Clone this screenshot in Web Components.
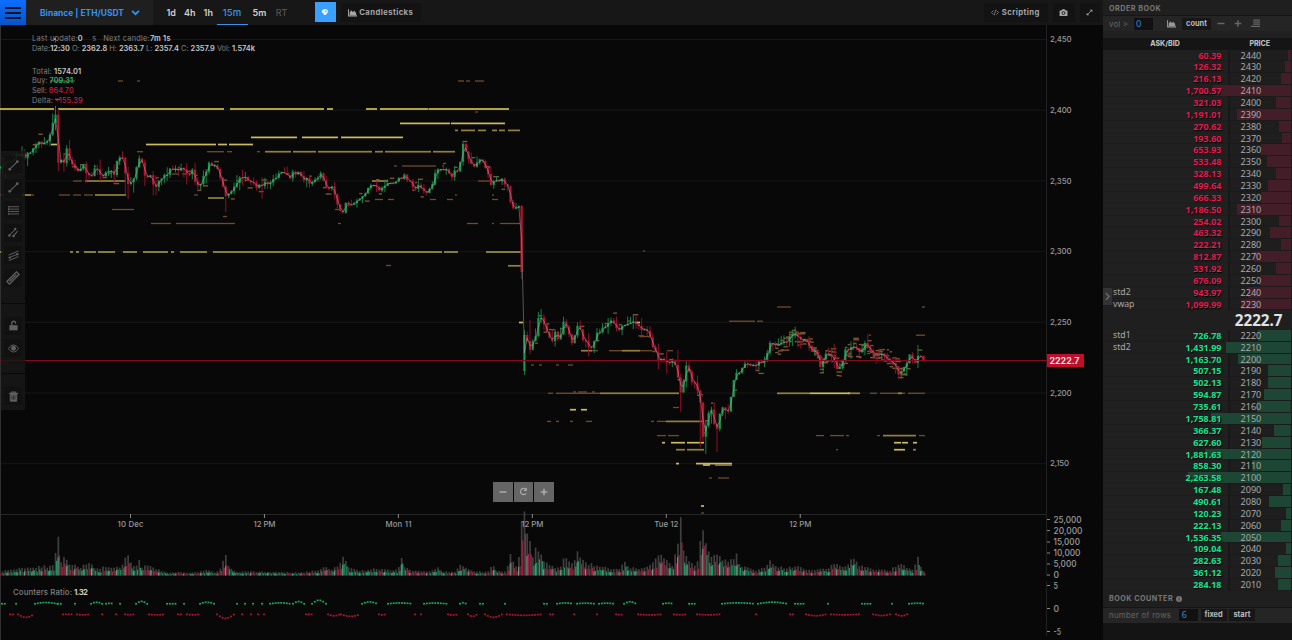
<!DOCTYPE html>
<html lang="en">
<head>
<meta charset="utf-8">
<title>ETH/USDT</title>
<style>
  html, body { margin: 0; height: 100%; background: #080808; overflow: hidden; }
</style>
</head>
<body>
<trade-app></trade-app>

<script>
const make = (html) => {
  const t = document.createElement('template');
  t.innerHTML = html;
  return t;
};

class BaseElement extends HTMLElement {
  constructor() {
    super();
    this.attachShadow({ mode: 'open' });
    this.shadowRoot.appendChild(this.constructor.template.content.cloneNode(true));
  }
  $(sel) { return this.shadowRoot.querySelector(sel); }
}

/* ---------- icons ---------- */
const ICONS = {
  menu: '<path d="M0 3h16M0 8h16M0 13h16" stroke-width="2"/>',
  down: '<path d="M2 5l6 6 6-6" stroke-width="3.2"/>',
  area: '<path d="M1 2v12h15" stroke-width="1.8"/><path d="M3 12.500V8l3-4 2.500 3 2.500-2 3.500 4v3.500z" fill="currentColor" stroke="none"/>',
  head: '<path d="M8 2c4 0 6 2.500 6.500 6l-1.500 1-1 3-2 .5V14H5.500v-2.500C3 10.500 1.500 9 1.500 7 1.500 4 4.500 2 8 2z" fill="currentColor" stroke="none"/><circle cx="10" cy="6.500" r="1.300" fill="#3aa0ff" stroke="none"/>',
  code: '<path d="M5 4L1 8l4 4M11 4l4 4-4 4M9.500 2.500l-3 11" stroke-width="1.3"/>',
  camera: '<path d="M1 4.500h3.500L6 2h4l1.500 2.500H15V14H1z" fill="currentColor" stroke="none"/><circle cx="8" cy="9" r="2.600" stroke="#111" stroke-width="1.500"/>',
  expand: '<path d="M5 11L11 5" stroke-width="2"/><path d="M8.500 1.500h6v6zM1.500 8.500v6h6z" fill="currentColor" stroke="none"/>',
  lines: '<path d="M3 2.500h13M3 6h13M3 9.500h13M3 13h13" stroke-width="1.400"/><path d="M0 2.500h2.500M0 6h2.500M0 9.500h2.500M0 13h2.500" stroke-width="2.200"/>',
  trend: '<path d="M3 13L13 3" stroke-width="1.600"/><circle cx="2.500" cy="13.500" r="2" fill="currentColor" stroke="none"/><circle cx="13.500" cy="2.500" r="2" fill="currentColor" stroke="none"/>',
  pitch: '<path d="M2 12L10 4M8 13l6-7" stroke-width="1.500"/><circle cx="2" cy="12.500" r="1.800" fill="currentColor" stroke="none"/><circle cx="10.500" cy="3" r="1.800" fill="currentColor" stroke="none"/><circle cx="8" cy="13" r="1.800" fill="currentColor" stroke="none"/>',
  channel: '<path d="M1 7.500l14-6M1 11.500l14-6M1 15.500l14-6" stroke-width="1.400"/><circle cx="2.500" cy="11" r="1.700" fill="currentColor" stroke="none"/><circle cx="13.500" cy="6" r="1.700" fill="currentColor" stroke="none"/>',
  ruler: '<path d="M1 12L12 1l3 3L4 15zM4 12l8-8" stroke-width="1.500"/>',
  lock: '<path d="M2 7.500h12V15H2z" fill="currentColor" stroke="none"/><path d="M5.500 8V4.500a2.700 2.700 0 0 1 5.400 0V5.500" stroke-width="1.900"/>',
  eye: '<path d="M.5 8C3 4.500 5.500 3 8 3s5 1.500 7.500 5C13 11.500 10.500 13 8 13S3 11.500.5 8z" stroke-width="1.400"/><circle cx="8" cy="7.500" r="3.600" fill="currentColor" stroke="none"/>',
  trash: '<path d="M1.500 3.500h13M5.500 3V1.500h5V3" stroke-width="1.600"/><path d="M3.200 4.500h9.600V15H3.200z" fill="currentColor" stroke-width="1"/><path d="M5.800 6.500v6M8 6.500v6M10.200 6.500v6" stroke="#151515" stroke-width=".9"/>',
  minus: '<path d="M1 8h14" stroke-width="3"/>',
  plus: '<path d="M1.500 8h13M8 1.500v13" stroke-width="3"/>',
  reload: '<path d="M12.500 11.500A5.500 5.500 0 1 1 12 4" stroke-width="2.200"/><path d="M14 1v6H8z" fill="currentColor" stroke="none"/>',
  steps: '<path d="M4 2h12M4 5.500h12M4 9h12M0 13h16" stroke-width="2"/>',
  right: '<path d="M5 2l6 6-6 6" stroke-width="2"/>',
  info: '<circle cx="8" cy="8" r="8" fill="currentColor" stroke="none"/><path d="M8 7v5M8 3.500v2" stroke="#1c1c1c" stroke-width="2.200"/>'
};

class UiIcon extends BaseElement {
  static template = make(`
    <style>
      :host { display: inline-block; flex: none; width: 10px; height: 10px; }
      svg { display: block; width: 100%; height: 100%; fill: none; stroke: currentColor; }
    </style>
    <svg viewBox="0 0 16 16"></svg>`);
  connectedCallback() { this.$('svg').innerHTML = ICONS[this.getAttribute('name')] || ''; }
}

/* ---------- top bar ---------- */
class TopBar extends BaseElement {
  static template = make(`
    <style>
      :host { display: flex; height: 25px; background: #171717; color: #d2d2d2; font-weight: 600; }
      .menu { width: 26px; display: grid; place-items: center; background: linear-gradient(#0d6efd, #0754ca); color: #07162e; }
      .menu ui-icon { width: 16px; height: 16px; }
      .pair { width: 127px; box-sizing: border-box; padding-left: 14px; display: flex; align-items: center; gap: 3px; background: #1f1f1f; color: #3793ec; font-size: 8.400px; font-weight: 700; letter-spacing: .04px; white-space: nowrap; }
      .pair span { width: 88px; }
      .pair ui-icon { width: 9px; height: 9px; }
      nav { display: flex; margin-left: 9px; font-size: 9px; }
      nav span { display: grid; place-items: center; box-sizing: border-box; height: 25px; width: 18.500px; }
      nav .on { width: 31px; margin: 0 1px 0 -1px; font-weight: 500; color: #3793ec; border-bottom: 1.500px solid #3793ec; font-size: 9.600px; }
      nav .five { width: 22px; }
      nav .rt { color: #555; width: 22px; font-weight: 500; }
      .head { width: 21px; height: 20px; margin: 2px 0 0 22px; background: #3aa0ff; color: #e4f0fb; display: grid; place-items: center; }
      .head ui-icon { width: 8px; height: 8px; }
      .btn { display: flex; align-items: center; justify-content: center; gap: 2.500px; height: 19px; margin-top: 3px; background: #131313; color: #a6a6a6; font-size: 7.700px; font-weight: 700; letter-spacing: .42px; box-sizing: border-box; }
      .btn ui-icon { width: 9px; height: 9px; }
      .candles { width: 80px; margin-left: 5px; }
      .grow { flex: 1; }
    </style>
    <div class="menu"><ui-icon name="menu"></ui-icon></div>
    <div class="pair"><span>Binance | ETH/USDT</span><ui-icon name="down"></ui-icon></div>
    <nav><span>1d</span><span>4h</span><span>1h</span><span class="on">15m</span><span class="five">5m</span><span class="rt">RT</span></nav>
    <div class="head"><ui-icon name="head"></ui-icon></div>
    <div class="btn candles"><ui-icon name="area"></ui-icon><span>Candlesticks</span></div>
    <div class="grow"></div>
    <div class="btn" style="width:64px"><ui-icon name="code" style="width:8px"></ui-icon><span>Scripting</span></div>
    <div class="btn" style="width:22px;margin-left:5px"><ui-icon name="camera"></ui-icon></div>
    <div class="btn" style="width:20px;margin:3px 3px 0 5px"><ui-icon name="expand" style="width:7px;height:7px"></ui-icon></div>`);
}

/* ---------- drawing tools ---------- */
class DrawingTools extends BaseElement {
  static template = make(`
    <style>
      :host { display: flex; flex-direction: column; width: 24px; height: 259px; background: rgba(23, 23, 23, .86); color: #606060; align-items: center; }
      div { width: 18px; height: 18px; margin-top: 4.500px; background: rgba(14, 14, 14, .5); display: grid; place-items: center; flex: none; }
      div:first-of-type { margin-top: 5px; }
      ui-icon { width: 11px; height: 11px; }
      hr { width: 24px; margin: 16px 0 8.500px; border: 0; border-top: 1px solid #0a0a0a; flex: none; }
    </style>
    <div><ui-icon name="trend"></ui-icon></div>
    <div><ui-icon name="trend"></ui-icon></div>
    <div><ui-icon name="lines"></ui-icon></div>
    <div><ui-icon name="pitch"></ui-icon></div>
    <div><ui-icon name="channel"></ui-icon></div>
    <div><ui-icon name="ruler" style="width:14px;height:14px"></ui-icon></div>
    <hr>
    <div><ui-icon name="lock"></ui-icon></div>
    <div><ui-icon name="eye"></ui-icon></div>
    <hr>
    <div><ui-icon name="trash"></ui-icon></div>`);
}

/* ---------- candle read-out ---------- */
class CandleLegend extends BaseElement {
  static template = make(`
    <style>
      :host { display: block; font-size: 7.400px; line-height: 9.700px; color: #808080; }
      div { white-space: pre; }
      b { color: #c8c8c8; font-weight: 600; }
      .up { color: #18b86e; } .down { color: #c41d45; font-weight: 500; }
      .first { letter-spacing: .23px; } .second { letter-spacing: -.01px; }
      .sum { margin-top: 12.800px; }
      .wide { letter-spacing: .12px; }
    </style>
    <div class="first">Last update:<b>0</b>    s   Next candle:<b>7m 1s</b></div>
    <div class="second">Date:<b>12:30</b> O: <b>2362.8</b> H: <b>2363.7</b> L: <b>2357.4</b> C: <b>2357.9</b> Vol: <b>1.574k</b></div>
    <div class="sum wide">Total: <b>1574.01</b></div>
    <div>Buy: <b class="up">709.31</b></div>
    <div>Sell: <b class="down">864.70</b></div>
    <div class="wide">Delta: <b class="down">-155.39</b></div>`);
}

class ZoomButtons extends BaseElement {
  static template = make(`
    <style>
      :host { display: flex; gap: 1px; }
      div { width: 19.500px; height: 19.500px; background: #656565; color: #aaa; display: grid; place-items: center; }
      ui-icon { width: 8px; height: 8px; }
    </style>
    <div><ui-icon name="minus"></ui-icon></div>
    <div><ui-icon name="reload" style="width:9px;height:9px"></ui-icon></div>
    <div><ui-icon name="plus"></ui-icon></div>`);
}

/* ---------- chart ---------- */
const STEP = 2.791;

// close line, x y pairs in chart pixels
const PRICE = [0,168, 4,163, 10,164, 15,157, 20,153, 26,157, 32,150, 36,147, 40,137, 43,147, 47,140, 52,128, 55,108, 58,160,
  61,161, 64,163, 67,148, 70,165, 76,170, 83,165, 90,179, 97,166, 102,178, 107,168, 114,177, 118,156, 123,158, 127,185, 133,180,
  140,158, 146,177, 150,172, 154,188, 160,180, 167,174, 172,168, 182,169, 188,176, 192,171, 198,187, 203,178, 210,163, 217,170,
  222,178, 225,200, 230,191, 240,179, 247,178, 257,188, 265,184, 275,178, 283,173, 290,176, 297,171, 305,179, 312,185, 320,173,
  327,192, 333,188, 337,202, 341,216, 346,203, 352,202, 357,199, 362,196, 369,188, 373,182, 380,190, 388,184, 396,182, 405,175,
  413,186, 420,187, 428,193, 432,187, 436,171, 445,170, 451,176, 459,169, 463,145, 466,150, 470,163, 476,166, 481,158, 486,167,
  491,183, 497,179, 503,181, 508,189, 512,206, 519,206, 521.5,271, 524,335, 527,340, 530,350, 536,334, 539,315, 545,326, 551,343,
  556,331, 559,342, 564,321, 567,325, 572,344, 578,325, 583,339, 591,347, 597,333, 605,325, 612,321, 618,328, 627,325, 634,322,
  640,330, 647,330, 652,343, 659,360, 667,363, 672,358, 676,370, 681,394, 687,364, 693,384, 697,386, 701,405, 703,436, 706,425,
  710,405, 716,433, 721,408, 728,412, 734,378, 740,371, 748,363, 757,366, 766,356, 770,345, 776,348, 783,343, 787,341, 793,334,
  800,338, 806,341, 812,351, 816,352, 820,366, 827,350, 832,356, 838,371, 845,352, 853,345, 859,352, 866,343, 871,351, 877,354,
  888,357, 895,365, 899,378, 905,367, 911,353, 915,363, 919,355, 924,360];

// volume height above the base line
const VOLUME = [0,4, 20,8, 30,8, 40,10, 50,9, 54,10, 56,26, 58,38, 61,15, 63,18, 70,11, 80,9, 90,12, 95,7, 105,9, 118,9, 123,10,
  125.500,19, 128.500,19, 132,11, 136,8, 139,15, 142,9, 145,10, 155,8, 162,4, 170,3.500, 190,3, 200,4, 209,6, 215,3, 221,7, 225.500,24,
  229,8, 236,4, 260,4, 300,3, 315,5, 325,8, 332,6, 338,11, 341,17, 343,17, 350,8, 360,5, 375,7, 390,6, 398,6, 401.500,18, 405,8,
  412,5, 430,4, 437,9, 442,4, 455,4, 461,11, 470,7, 475,4, 488,4, 492,11, 497,4, 506,5, 510,21, 513,14, 518,6, 521.500,52,
  524,64, 527,46, 530,32, 533,21, 536,27, 539,25, 544,14, 555,8, 561,10, 564,17, 570,14, 575,15, 577.500,26, 581,15, 590,12, 600,9,
  612,7, 620,7, 624,14, 628,9, 640,6, 650,10, 656,20, 659,25, 664,16, 667,18, 672,9, 675,22, 678,36, 680.500,56, 683,27, 690,14,
  697,10, 700,35, 703,52, 706,36, 710,19, 717,25, 722,16, 730,14, 736,22, 740,11, 755,5, 765,8, 770,17, 774,9, 785,8, 797,9,
  810,5, 825,7, 837,12, 842,8, 849,13, 853,19, 858,11, 870,7, 890,5, 897,11, 905,10, 912,6, 916,12, 918,22, 920.500,9, 925,3];

// resting-liquidity levels: y, tone, then x ranges
const LEVELS = [
  [39, 'y', '54-56'],
  [81, 'b', '50-75 118-123 137-140 458-464 466-470 475-484'],
  [109, 'y', '0-54 58-224 230-324 327-333 366-377 380-428 428.500-509'],
  [112, 'b', '475-478'],
  [123.4, 'y', '400-450 451-505'],
  [130.4, 'g', '455-458 461-475 478-486 492-497 499-505 508-520'],
  [137.4, 'y', '251-297 302-338 341-403'],
  [144.5, 'y', '51-57 146-216 218-227 229-253'],
  [151.7, 'g', '265-291 293-316 318-372 375-383 385-431 433-455'],
  [151.7, 'b', '137-143 207-224 227-232 257-260'],
  [166, 'b', '394-397 402-436 442-444'],
  [174, 'b', '17-22 172-179 182-187'],
  [181, 'g', '85-125 372-388'],
  [181, 'b', '73-82 478-490'],
  [195, 'b', '0-34 59-70 73-81 84-93 194-198 455-457 492-494'],
  [195, 'g', '22-31 95-126'],
  [198, 'g', '208-224'],
  [199.500, 'b', '375-383 388-394 430-436 447-453 492-498'],
  [209.500, 'b', '112-134 335-339'],
  [216.500, 'b', '223-227'],
  [223.500, 'b', '151-171 176-235 338-341 467-478 492-494 500-520'],
  [252, 'o', '0-3 70-73 76-79 84-96 98-115 123-137 143-168 171-174 180-207 213-442 444-458 486-521'],
  [251, 'b', '643-645'],
  [265.800, 'g', '508-521'],
  [265.500, 'b', '386-391'],
  [307, 'b', '777-791 922-925'],
  [321.200, 'b', '729-755 757-763'],
  [322.500, 'y', '519-523 635-640'],
  [335.200, 'b', '869-871 916-925'],
  [336.500, 'b', '640-650'],
  [350.700, 'g', '581-592 622-640'],
  [350.700, 'b', '592-598 609-622 640-652 667-673'],
  [365, 'b', '531-534 539-542 556-559 568-573'],
  [392, 'b', '573-576 578-587 592-595'],
  [393.300, 'b', '548-553 556-600 870-877 880-905 908-925'],
  [393.300, 'g', '600-679 777-810 848-860 898-902'],
  [393.300, 'y', '810-850'],
  [407.500, 'b', '673-679'],
  [409.700, 'y', '570-576 581-587'],
  [421.400, 'b', '547-551 556-559 570-573 586-592 651-654 657-666'],
  [421.400, 'g', '666-702'],
  [435.600, 'b', '657-666 668-679 816-824 830-844 846-849 877-880 919-925'],
  [435.600, 'g', '883-916'],
  [442.700, 'y', '662-665 671-685 687-704 894-901 902-908 913-917'],
  [449.700, 'g', '676-685 687-704 913-916'],
  [449.700, 'y', '894-905'],
  [449.700, 'b', '836-838'],
  [463.600, 'y', '676-679 696-732'],
  [465, 'y', '703-710'],
  [465, 'g', '715-732'],
  [478, 'b', '709-712 718-729'],
  [506, 'y', '701-704'],
  [513, 'b', '701-704']
];
const TONES = { y: '#cdbd5a', g: '#94803c', b: '#724a2a', o: '#99934a' };

// counter dots: "from-to" or "from-to:bump"
const COUNTS_UP = '2-7 16-16 35-57:1.2 58-62 75-75 91-102:1.5 106-113:.5 120-122 136-147:2.4 167-176 184-184 200-214:1.5 237-239 245-245 253-253 262-262 270-290:.9 293-304:2.2 312-326:3.5 362-377:1.8 388-412:.8 424-446:.7 460-466:1 480-483 505-505 544-547 557-573:.8 577-594:.6 599-614:.6 624-636:2 663-673:.6 689-695 722-754:.9 758-787:1.6 795-804 828-828 862-872 892-892 909-925:.5';
const COUNTS_DOWN = '10-13 18-34:3 63-72 77-89:.5 102-102 116-116 125-134:.4 149-165:.5 178-181 187-199:.5 217-234:4 242-242 251-251 258-258 264-264 306-312 328-340:1.5 341-360:2 379-385:.5 415-415 421-421 448-458:.7 468-477:2 485-502:3 507-541:1 550-555 574-574 597-597 616-623:.4 638-661:.6 674-687:.4 697-720:.5 756-756 790-793 806-826:1.4 831-859:.5 873-890:1.2 896-907:1.5';

const lerp = (pts, x) => {
  let i = 0;
  while (i < pts.length - 4 && pts[i + 2] < x) i += 2;
  const t = Math.min(1, Math.max(0, (x - pts[i]) / (pts[i + 2] - pts[i])));
  return pts[i + 1] + (pts[i + 3] - pts[i + 1]) * t;
};

class PriceChart extends BaseElement {
  static template = make(`
    <style>
      :host { display: block; position: relative; background: #080808; overflow: hidden; }
      svg { display: block; }
      text { font-size: 7.800px; fill: #9a9a9a; font-weight: 500; }
      .volume-axis { font-size: 9px; }
      candle-legend { position: absolute; left: 32px; top: 9.400px; }
      drawing-tools { position: absolute; left: 1px; top: 126px; }
      zoom-buttons { position: absolute; left: 493px; top: 457px; }
    </style>
    <svg width="1102" height="615" viewBox="0 25 1102 615"></svg>
    <drawing-tools></drawing-tools>
    <candle-legend></candle-legend>
    <zoom-buttons></zoom-buttons>`);

  connectedCallback() {
    let seed = 11;
    this.rand = () => (seed = (seed * 16807) % 2147483647) / 2147483647;
    this.$('svg').innerHTML = this.grid() + this.volume() + this.levels() + this.candles() + this.counters() + this.axes();
  }

  rect(x, y, w, h, fill) {
    return `<rect x="${x.toFixed(2)}" y="${y.toFixed(2)}" width="${w.toFixed(2)}" height="${h.toFixed(2)}" fill="${fill}"/>`;
  }

  grid() {
    let s = '';
    for (let i = 0; i < 7; i++) s += this.rect(0, 39 + i * 70.700, 1046, 1, '#171717');
    s += this.rect(0, 514, 1046, 1, '#262626') + this.rect(1046, 25, 1, 490, '#222');
    return s + this.rect(0, 25, 1, 615, '#303030');
  }

  levels() {
    let s = '';
    for (const [y, tone, spans] of LEVELS) {
      for (const span of spans.split(' ')) {
        const [a, b] = span.split('-').map(Number);
        const h = tone === 'b' ? 1.300 : 1.700;
        s += this.rect(a, y - h / 2, b - a, h, TONES[tone]);
      }
    }
    // scattered small orders close to the price
    for (let x = 2; x < 922; x += STEP) {
      const busy = x > 775 && x < 905;
      const n = busy ? 3 : (this.rand() < .32 ? 1 : 0);
      if (x > 505 && x < 530) continue;
      for (let k = 0; k < n; k++) {
        const y = lerp(PRICE, x) + (this.rand() - .5) * (busy ? 16 : 20);
        s += this.rect(x, y, 2 + this.rand() * 4, 1.400, '#7a5430');
      }
    }
    return s;
  }

  candles() {
    // long wicks: candle index -> [top, low], 0 leaves that side alone
    const tails = { 20: [106, 0], 21: [109, 171], 45: [0, 194], 46: [0, 199], 81: [0, 212], 187: [0, 279], 188: [330, 375],
      190: [320, 0], 244: [0, 412], 251: [0, 447], 253: [0, 454], 257: [0, 452], 243: [350, 0], 290: [336, 0], 329: [345, 0] };
    let s = '';
    let line = '';
    let prev = 169;
    for (let i = 0; i * STEP < 925; i++) {
      const x = i * STEP - .3;
      let close = lerp(PRICE, x) + (this.rand() - .5) * 5.200;
      let open = prev;
      if (i === 187) { open = 206; close = 272; }
      if (i === 188) { open = 371; close = 335; }
      const wild = x < 270 || (x > 525 && x < 730) || x > 770 ? 13 : 8;
      let top = Math.min(open, close) - this.rand() * this.rand() * wild;
      let low = Math.max(open, close) + this.rand() * this.rand() * wild;
      const [high, deep] = tails[i] || [0, 0];
      if (high) top = Math.min(top, high);
      if (deep) low = Math.max(low, deep);
      const up = close <= open;
      s += this.rect(x - .5, top, 1, low - top, up ? '#147f44' : '#8c1029');
      s += this.rect(x - 1.100, Math.min(open, close), 2.200, Math.max(1.200, Math.abs(close - open)), up ? '#14994d' : '#c01031');
      line += `${line ? 'L' : 'M'}${x.toFixed(1)} ${((open + close) / 2).toFixed(1)}`;
      prev = close;
    }
    return s + `<path d="${line}" fill="none" stroke="#aaa" stroke-opacity=".6" stroke-width=".8"/>`;
  }

  volume() {
    let s = '';
    for (let i = 0; i * STEP < 924; i++) {
      const x = i * STEP - .3;
      const h = Math.max(2, lerp(VOLUME, x) * (.82 + this.rand() * .28));
      const up = lerp(PRICE, x) < lerp(PRICE, x - STEP);
      const part = .45 + this.rand() * .25;
      s += this.rect(x - .8, 575.500 - h, 1.700, h, '#3f3f3f');
      s += this.rect(x + .5, 575.500 - h * part, 1.300, h * part, up ? '#149a63' : '#a51f42');
      if (i % 3 === 0) s += this.rect(x - .8, 575.500 - h * part * .9, 1, h * part * .9, '#789b82');
    }
    return s;
  }

  counters() {
    const dots = (spec, base, dir, fill) => spec.split(' ').map((part) => {
      const [range, bump = 0] = part.split(':');
      const [a, b] = range.split('-').map(Number);
      let out = '';
      for (let x = a; x <= b + .5; x += STEP) {
        const lift = b > a ? Math.sin(Math.PI * (x - a) / (b - a)) * bump * dir : 0;
        out += this.rect(x - .9, base + lift - .8, 1.900, 1.700, fill);
      }
      return out;
    }).join('');
    return dots(COUNTS_UP, 603.700, -1, '#18a960') + dots(COUNTS_DOWN, 614.300, 1, '#aa1730');
  }

  axes() {
    let s = '';
    ['2,450', '2,400', '2,350', '2,300', '2,250', '2,200', '2,150'].forEach((label, i) => {
      const w = i === 6 ? 19 : 21.500;
      s += `<text x="1050" y="${(42.100 + i * 70.700).toFixed(1)}" textLength="${w}">${label}</text>`;
    });
    ['10 Dec', '12 PM', 'Mon 11', '12 PM', 'Tue 12', '12 PM'].forEach((label, i) => {
      const x = 130.500 + i * 133.950;
      const w = i % 2 ? 22 : (i === 4 ? 24 : 26);
      s += this.rect(x - .5, 514, 1, 4, '#888');
      s += `<text x="${x - w / 2}" y="526.500" textLength="${w}">${label}</text>`;
    });
    [['25,000', 519.500, 28], ['20,000', 530.600, 29], ['15,000', 542, 26.500], ['10,000', 553, 27], ['5,000', 564, 23], ['0', 575, 5.500],
      ['5', 585.500, 4.500], ['0', 608.500, 5.500], ['-5', 631.500, 7.500]].forEach(([label, y, w]) => {
      s += this.rect(1047, y - .5, 3, 1, '#888');
      s += `<text class="volume-axis" x="1053.500" y="${y + 3}" textLength="${w}" lengthAdjust="spacingAndGlyphs">${label}</text>`;
    });
    s += this.rect(1046, 514, 1, 62, '#222') + this.rect(1046, 581, 1, 55, '#222');
    s += this.rect(0, 360, 1047, 1, '#87091f') + this.rect(1047, 354, 37, 13, '#c00e2d');
    s += `<text x="1049.500" y="363.500" textLength="30" lengthAdjust="spacingAndGlyphs" style="fill:#eee;font-weight:600;font-size:8.800px">2222.7</text>`;
    s += `<text x="13" y="594.500" textLength="59" style="fill:#808080">Counters Ratio:</text><text x="74" y="594.500" textLength="14" style="fill:#ccc;font-weight:700">1.32</text>`;
    return s;
  }
}

/* ---------- order book ---------- */
class BookRow extends BaseElement {
  static template = make(`
    <style>
      :host { display: grid; grid-template-columns: 30px 78.500px 1fr; align-items: center; height: 11.870px; box-sizing: border-box; padding-left: 10.500px;
        font: 9px/11px "Noto Sans", "Open Sans", sans-serif; color: #a8a8a8; border-bottom: 1px solid rgba(0, 0, 0, .08);
        background: linear-gradient(to left, var(--bar), var(--bar)) no-repeat right 1px top 0 / var(--w) 100%, linear-gradient(to right, #202020 125px, #181818 125px, #181818 127px, #1e1e1e 127px); }
      .size { text-align: right; font-weight: 700; color: var(--ink); text-shadow: 1px 1px 1px #000; }
      .price { padding-left: 19px; font-size: 9.100px; }
      .tag { font-size: 8.700px; white-space: nowrap; }
    </style>
    <span class="tag"></span><span class="size"></span><span class="price"></span>`);
  set row([price, size, side, tag]) {
    this.$('.tag').textContent = tag || '';
    this.$('.size').textContent = size;
    this.$('.price').textContent = price;
    this.style.setProperty('--w', parseFloat(size.replace(',', '')) * .0457 + 'px');
    this.style.setProperty('--bar', side === 'ask' ? '#431e28' : '#1d4634');
    this.style.setProperty('--ink', side === 'ask' ? '#e51a50' : '#12e48e');
  }
}

class BookPanel extends BaseElement {
  static template = make(`
    <style>
      :host { display: block; }
      .title { height: var(--title-height, 15px); padding-left: 6.500px; font-size: 7.200px; font-weight: 700; letter-spacing: .5px; color: #777; background: #1f1f1f; border-bottom: 1px solid #161616; display: flex; align-items: center; gap: 3px; }
      .controls { height: 15px; padding-left: 6.500px; display: flex; align-items: center; background: #252525; color: #666; font-size: 7.800px; letter-spacing: .2px; }
    </style>
    <div class="title"><slot name="title"></slot></div>
    <div class="controls"><slot></slot></div>`);
}

class OrderBook extends BaseElement {
  static template = make(`
    <style>
      :host { display: flex; flex-direction: column; background: #141414; position: relative; overflow: hidden; }
      .columns { margin-top: 6.500px; height: 12px; display: grid; grid-template-columns: 125px 1fr; text-align: center; font-size: 7px; line-height: 12.500px; font-weight: 800; color: #bbb; background: #151515; }
      .top { background: #202020; }
      .last { height: 19.500px; background: #1f1f1f; text-align: right; padding-right: 9.500px; font: 700 15.200px/20px "Noto Sans", sans-serif; color: #e2e2e2; }
      input { width: 19px; height: 12px; box-sizing: border-box; padding: 0 0 0 2.500px; border: 0; background: #111; color: #3485ce; font: 9.500px/12px "Noto Sans", sans-serif; }
      .chip { height: 12px; line-height: 12px; background: #171717; color: #bbb; font-weight: 700; font-size: 7.400px; text-align: center; letter-spacing: 0; }
      book-panel ui-icon { width: 9px; height: 9px; }
      book-panel .info { width: 6px; height: 6px; }
      .counter { --title-height: 16px; }
      .handle { position: absolute; left: 0; top: 288px; width: 9px; height: 17px; background: #333; color: #777; display: grid; place-items: center; }
      .handle ui-icon { width: 9px; height: 9px; }
    </style>
    <div class="top">
      <book-panel>
        <span slot="title" style="padding-top:1px">ORDER BOOK</span>
        <span style="width:24.500px">vol &gt;</span>
        <input value="0">
        <ui-icon name="area" style="margin-left:14.500px;color:#999"></ui-icon>
        <span class="chip" style="width:29px;margin-left:6px">count</span>
        <ui-icon name="minus" style="margin-left:6px;width:8px"></ui-icon>
        <ui-icon name="plus" style="margin-left:9px;width:8px"></ui-icon>
        <ui-icon name="steps" style="margin-left:9px"></ui-icon>
      </book-panel>
      <div class="columns"><span>ASK/BID</span><span>PRICE</span></div>
    </div>
    <div class="asks"></div>
    <div class="last">2222.7</div>
    <div class="bids"></div>
    <book-panel class="counter">
      <span slot="title">BOOK COUNTER</span><ui-icon slot="title" class="info" name="info"></ui-icon>
      <span style="width:70px;letter-spacing:.3px;white-space:nowrap">number of rows</span>
      <input value="6">
      <span class="chip" style="width:26px;margin-left:2.500px">fixed</span>
      <span class="chip" style="width:26px;margin-left:2.500px">start</span>
    </book-panel>
    <div class="handle"><ui-icon name="right"></ui-icon></div>`);

  connectedCallback() {
    const asks = '60.39 126.32 216.13 1,700.57 321.03 1,191.01 270.62 193.60 653.93 533.48 328.13 499.64 666.33 1,186.50 254.02 463.32 222.21 812.87 331.92 676.09 943.97 1,099.99'.split(' ');
    const bids = '726.78 1,431.99 1,163.70 507.15 502.13 594.87 735.61 1,758.81 366.37 627.60 1,881.63 858.30 2,263.58 167.48 490.61 120.23 222.13 1,536.35 109.04 282.63 361.12 284.18'.split(' ');
    const tags = { 2240: 'std2', 2230: 'vwap', 2220: 'std1', 2210: 'std2' };
    const fill = (box, sizes, from, side) => sizes.forEach((size, i) => {
      const price = from - i * 10;
      const el = document.createElement('book-row');
      el.row = [price, size, side, tags[price]];
      box.appendChild(el);
    });
    fill(this.$('.asks'), asks, 2440, 'ask');
    fill(this.$('.bids'), bids, 2220, 'bid');
  }
}

class TradeApp extends BaseElement {
  static template = make(`
    <style>
      :host { display: grid; grid-template-columns: 1102.500px 1fr; grid-template-rows: 25px 1fr; width: 1292px; height: 640px; overflow: hidden; font-family: Inter, "Open Sans", sans-serif; }
      order-book { grid-area: 1 / 2 / 3 / 3; }
    </style>
    <top-bar></top-bar>
    <price-chart></price-chart>
    <order-book></order-book>`);
}

customElements.define('ui-icon', UiIcon);
customElements.define('top-bar', TopBar);
customElements.define('drawing-tools', DrawingTools);
customElements.define('candle-legend', CandleLegend);
customElements.define('zoom-buttons', ZoomButtons);
customElements.define('price-chart', PriceChart);
customElements.define('book-row', BookRow);
customElements.define('book-panel', BookPanel);
customElements.define('order-book', OrderBook);
customElements.define('trade-app', TradeApp);
</script>
</body>
</html>
